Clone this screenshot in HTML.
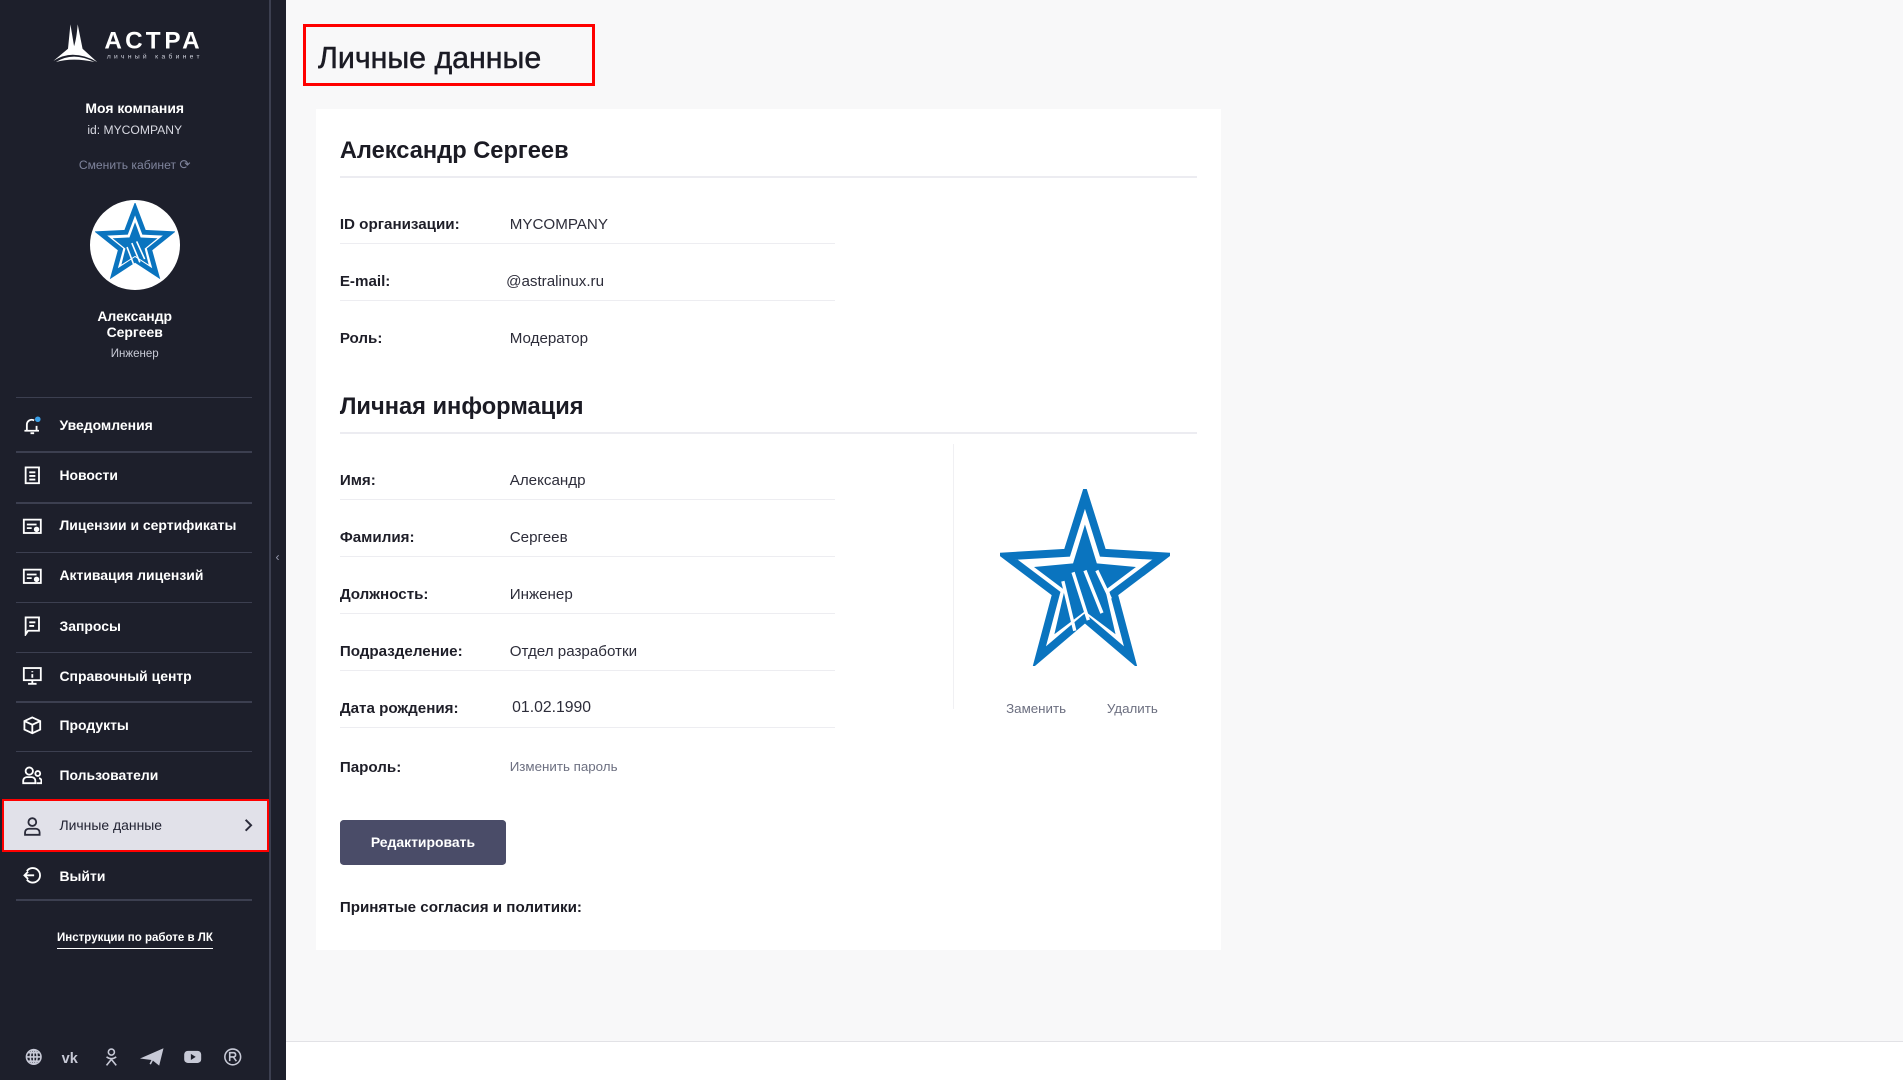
<!DOCTYPE html>
<html><head><meta charset="utf-8">
<style>
html,body{margin:0;padding:0;overflow:hidden;background:#f8f8f9;}
#root{zoom:1.21365;width:1568px;height:890px;position:relative;font-family:"Liberation Sans","DejaVu Sans",sans-serif;overflow:hidden;background:#f8f8f9;}
.abs{position:absolute;}
#side{left:0;top:0;width:236px;height:890px;background:#1d1f2b;}
#side .vl{left:222px;top:0;width:1px;height:890px;background:#3c3f50;}
.c{left:0;width:222px;text-align:center;color:#fff;}
.mline{left:13px;width:195px;height:1px;background:#3c3f50;}
.mi{left:49px;color:#fff;font-size:11.5px;font-weight:bold;}
.ic{left:18px;width:17px;height:17px;}
#main{left:236px;top:0;width:1332px;height:858px;}
#foot{left:236px;top:858px;width:1332px;height:32px;background:#fff;border-top:1px solid #e2e2e6;}
.lab{left:280px;font-size:12.5px;font-weight:bold;color:#1e1e28;}
.val{left:420px;font-size:12.5px;color:#2d2d3a;}
.sep{left:280px;width:408px;height:1px;background:#ededf1;}
</style></head><body>
<div id="root">
<div id="side" class="abs">
  <div class="vl abs"></div>
  <svg class="abs" style="left:42px;top:18px" width="128" height="36" viewBox="0 0 128 36">
    <path d="M16 2 L14 22 L2 32 Q10 27 18 27 Q28 27 38 33 L26 22 L22 2 Q21 14 19 20 Z" fill="#fff"/>
    <path d="M4 33 Q18 24 36 33 Q18 29 4 33Z" fill="#fff"/>
    <text x="44" y="22" font-family="Liberation Sans" font-weight="bold" font-size="20" fill="#fff" letter-spacing="1.5" textLength="80">АСТРА</text>
    <text x="46" y="30" font-family="Liberation Sans" font-size="5.5" fill="#cfd1dc" letter-spacing="1.6" textLength="78">личный кабинет</text>
  </svg>
  <div class="abs c" style="top:82px;font-size:11.5px;font-weight:bold">Моя компания</div>
  <div class="abs c" style="top:101px;font-size:10px;color:#d8d9e2">id: MYCOMPANY</div>
  <div class="abs c" style="top:129px;font-size:10px;color:#7f849c">Сменить кабинет <span style="font-size:11px">⟳</span></div>
  <div class="abs" style="left:74px;top:165px;width:74px;height:74px;border-radius:50%;background:#fff;"></div>
  <svg class="abs" style="left:78px;top:167px" width="66" height="66" viewBox="0 0 100 100">
    <polygon points="50,7 61.2,36.6 92.8,38.1 68.1,57.9 76.5,88.4 50,71 23.5,88.4 31.9,57.9 7.2,38.1 38.8,36.6" fill="none" stroke="#0a74bf" stroke-width="6" stroke-linejoin="miter"/>
    <polygon points="50,24 57,43 78,44 62,57 67,77 50,66 33,77 38,57 22,44 43,43" fill="#0a74bf"/>
    <path d="M40 55 L48 76 M46 50 L56 74 M52 48 L62 70" stroke="#fff" stroke-width="2"/>
  </svg>
  <div class="abs c" style="top:255px;font-size:11.5px;font-weight:bold;line-height:13px">Александр<br>Сергеев</div>
  <div class="abs c" style="top:287px;font-size:9.5px;color:#c8cad6">Инженер</div>

  <div class="abs mline" style="top:327px"></div>
  <div class="abs mline" style="top:372px"></div>
  <div class="abs mline" style="top:414px"></div>
  <div class="abs mline" style="top:455px"></div>
  <div class="abs mline" style="top:496px"></div>
  <div class="abs mline" style="top:537px"></div>
  <div class="abs mline" style="top:578px"></div>
  <div class="abs mline" style="top:619px"></div>
  <div class="abs mline" style="top:741px"></div>

  <svg class="abs ic" style="top:342px" viewBox="0 0 17 17" fill="none" stroke="#fff" stroke-width="1.5"><path d="M4 13 V8 A4 4 0 0 1 10 4.5 M12 9 V13 M2 13 H14 M7 15 H10"/><circle cx="13" cy="3.5" r="2.3" fill="#3aa0e8" stroke="none"/></svg>
  <div class="abs mi" style="top:344px">Уведомления</div>
  <svg class="abs ic" style="top:383px" viewBox="0 0 17 17" fill="none" stroke="#fff" stroke-width="1.5"><rect x="3" y="2" width="11" height="13"/><path d="M6 6H11 M6 9H11 M6 12H11"/></svg>
  <div class="abs mi" style="top:385px">Новости</div>
  <svg class="abs ic" style="top:425px" viewBox="0 0 17 17" fill="none" stroke="#fff" stroke-width="1.5"><rect x="1.5" y="3" width="14" height="11"/><path d="M4 7H12 M4 10H8"/><circle cx="12" cy="11" r="1.5" fill="#fff"/></svg>
  <div class="abs mi" style="top:426px">Лицензии и сертификаты</div>
  <svg class="abs ic" style="top:466px" viewBox="0 0 17 17" fill="none" stroke="#fff" stroke-width="1.5"><rect x="1.5" y="3" width="14" height="11"/><path d="M4 7H12 M4 10H8"/><circle cx="12" cy="11" r="1.5" fill="#fff"/></svg>
  <div class="abs mi" style="top:467px">Активация лицензий</div>
  <svg class="abs ic" style="top:507px" viewBox="0 0 17 17" fill="none" stroke="#fff" stroke-width="1.5"><path d="M3 16V2H14V13H5Z"/><path d="M6 6H11 M6 9H10"/></svg>
  <div class="abs mi" style="top:509px">Запросы</div>
  <svg class="abs ic" style="top:548px" viewBox="0 0 17 17" fill="none" stroke="#fff" stroke-width="1.5"><rect x="1.5" y="2.5" width="14" height="10"/><path d="M8.5 5V6 M8.5 7.5V10.5 M5 15.5H12 M8.5 12.5V15.5"/></svg>
  <div class="abs mi" style="top:550px">Справочный центр</div>
  <svg class="abs ic" style="top:589px" viewBox="0 0 17 17" fill="none" stroke="#fff" stroke-width="1.5"><path d="M8.5 2L15 5V12L8.5 15L2 12V5Z M2 5L8.5 8L15 5 M8.5 8V15"/></svg>
  <div class="abs mi" style="top:591px">Продукты</div>
  <svg class="abs ic" style="top:630px" viewBox="0 0 17 17" fill="none" stroke="#fff" stroke-width="1.5"><circle cx="6" cy="5" r="3"/><path d="M1 15V13A3 3 0 0 1 4 10H8A3 3 0 0 1 11 13V15Z"/><circle cx="13" cy="7" r="2"/><path d="M12 15H16V13A2 2 0 0 0 14 11"/></svg>
  <div class="abs mi" style="top:632px">Пользователи</div>

  <div class="abs" style="left:2px;top:658px;width:216px;height:41px;background:#e1e1e9;border:2px solid #f00;"></div>
  <svg class="abs ic" style="top:672px" viewBox="0 0 17 17" fill="none" stroke="#2a2b3a" stroke-width="1.5"><circle cx="8.5" cy="5" r="3.2"/><path d="M2.5 15.5V13.5A3 3 0 0 1 5.5 10.5H11.5A3 3 0 0 1 14.5 13.5V15.5Z"/></svg>
  <div class="abs" style="left:49px;top:673px;font-size:11.5px;color:#1f2030">Личные данные</div>
  <svg class="abs" style="left:199px;top:674px" width="10" height="12" viewBox="0 0 10 12" fill="none" stroke="#2a2b3a" stroke-width="1.6"><path d="M3 1.5L7.5 6L3 10.5"/></svg>

  <svg class="abs ic" style="top:713px" viewBox="0 0 17 17" fill="none" stroke="#fff" stroke-width="1.5"><path d="M4 5A6 6 0 1 1 4 12 M2 8.5H10 M5 5.5L2 8.5L5 11.5"/></svg>
  <div class="abs mi" style="top:715px">Выйти</div>

  <div class="abs" style="left:47px;top:768px;font-size:9.5px;font-weight:bold;color:#fff;border-bottom:1px solid #fff;padding-bottom:3px;">Инструкции по работе в ЛК</div>

  <svg class="abs" style="left:20px;top:862px" width="185" height="18" viewBox="0 0 185 18" fill="none" stroke="#c7c9d6" stroke-width="1.3">
    <circle cx="8" cy="9" r="6"/><path d="M2 9H14 M8 3V15 M3.5 5.5H12.5 M3.5 12.5H12.5"/><ellipse cx="8" cy="9" rx="2.8" ry="6"/>
    <text x="31" y="14" font-family="Liberation Sans" font-weight="bold" font-size="12" fill="#c7c9d6" stroke="none">vk</text>
    <circle cx="72" cy="5" r="2.5"/><path d="M68 9Q72 12 76 9 M72 11L68 16 M72 11L76 16"/>
    <path d="M98 10L114 3L111 15L106 11Z M106 11L104 15" fill="#c7c9d6"/>
    <rect x="132" y="4" width="14" height="10" rx="3" fill="#c7c9d6" stroke="none"/><path d="M137.5 6.5V11.5L141.5 9Z" fill="#1d1f2b" stroke="none"/>
    <circle cx="172" cy="9" r="6.5"/><path d="M169.5 12.5V5.5H173A1.8 1.8 0 0 1 173 9H169.5 M172.5 9L175 12.5"/>
  </svg>
  <div class="abs" style="left:227px;top:453px;color:#9a9db0;font-size:10px">‹</div>
</div>

<div id="main" class="abs"></div>
<div id="foot" class="abs"></div>

<div class="abs" style="left:250px;top:20px;width:235px;height:46px;border:3px solid #f00;"></div>
<div class="abs" style="left:262px;top:35px;font-size:25px;color:#1b1b24;-webkit-text-stroke:0.4px #1b1b24;">Личные данные</div>

<div class="abs" style="left:260px;top:90px;width:746px;height:693px;background:#fff;"></div>
<div class="abs" style="left:280px;top:114px;font-size:19.5px;font-weight:bold;color:#1b1b24;">Александр Сергеев</div>
<div class="abs" style="left:280px;top:145px;width:706px;height:2px;background:#ececf1;"></div>

<div class="abs lab" style="top:178px">ID организации:</div><div class="abs val" style="top:178px">MYCOMPANY</div>
<div class="abs sep" style="top:200px"></div>
<div class="abs lab" style="top:225px">E-mail:</div><div class="abs val" style="left:417px;top:225px">@astralinux.ru</div>
<div class="abs sep" style="top:247px"></div>
<div class="abs lab" style="top:272px">Роль:</div><div class="abs val" style="top:272px">Модератор</div>

<div class="abs" style="left:280px;top:325px;font-size:19.5px;font-weight:bold;color:#1b1b24;">Личная информация</div>
<div class="abs" style="left:280px;top:356px;width:706px;height:2px;background:#ececf1;"></div>
<div class="abs" style="left:785px;top:366px;width:1px;height:218px;background:#f0f0f3;"></div>

<div class="abs lab" style="top:389px">Имя:</div><div class="abs val" style="top:389px">Александр</div>
<div class="abs sep" style="top:411px"></div>
<div class="abs lab" style="top:436px">Фамилия:</div><div class="abs val" style="top:436px">Сергеев</div>
<div class="abs sep" style="top:458px"></div>
<div class="abs lab" style="top:483px">Должность:</div><div class="abs val" style="top:483px">Инженер</div>
<div class="abs sep" style="top:505px"></div>
<div class="abs lab" style="top:530px">Подразделение:</div><div class="abs val" style="top:530px">Отдел разработки</div>
<div class="abs sep" style="top:552px"></div>
<div class="abs lab" style="top:577px">Дата рождения:</div><div class="abs val" style="left:422px;top:576px;font-size:13px">01.02.1990</div>
<div class="abs sep" style="top:599px"></div>
<div class="abs lab" style="top:625px">Пароль:</div><div class="abs" style="left:420px;top:625px;font-size:11px;color:#6c6f80">Изменить пароль</div>

<div class="abs" style="left:280px;top:676px;width:137px;height:37px;background:#4a4c68;border-radius:3px;color:#fff;font-size:11.5px;font-weight:bold;text-align:center;line-height:37px;">Редактировать</div>
<div class="abs" style="left:280px;top:741px;font-size:12.5px;font-weight:bold;color:#1b1b24;">Принятые согласия и политики:</div>

<svg class="abs" style="left:824px;top:403px" width="140" height="146" viewBox="0 0 100 100" preserveAspectRatio="none">
  <polygon points="50,4 60.5,36 96,38 67,59 77,95 50,73 23,95 33,59 4,38 39.5,36" fill="none" stroke="#0a74bf" stroke-width="4.5"/>
  <polygon points="50,20 57,42 80,44 62,57 68,82 50,69 32,82 38,57 20,44 43,42" fill="#0a74bf"/>
  <path d="M37 52 L44 80 M43 47 L52 74 M50 46 L60 70 M57 46 L65 62" stroke="#fff" stroke-width="2"/>
</svg>
<div class="abs" style="left:829px;top:578px;font-size:11px;color:#6c6f80">Заменить</div>
<div class="abs" style="left:912px;top:578px;font-size:11px;color:#6c6f80">Удалить</div>
</div>
</body></html>
